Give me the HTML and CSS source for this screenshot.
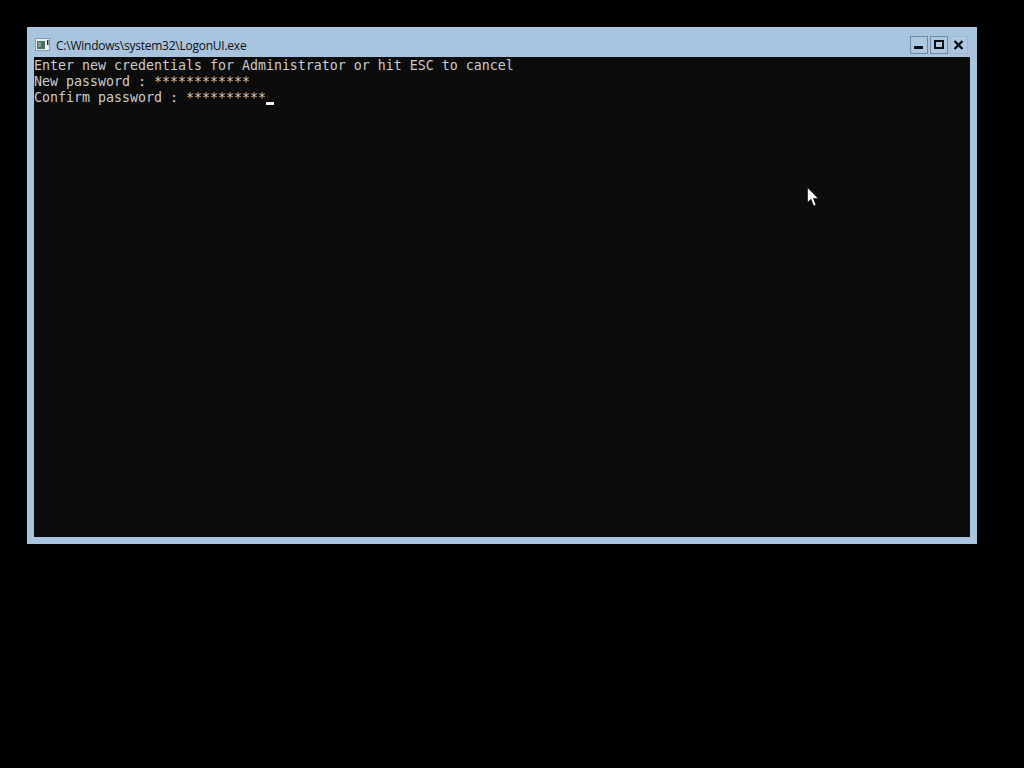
FILE: index.html
```html
<!DOCTYPE html>
<html lang="en">
<head>
<meta charset="utf-8">
<title>LogonUI</title>
<link rel="stylesheet" href="styles.css">
</head>
<body>
<div class="window">
  <div class="titlebar">
    <svg class="app-icon" width="16" height="14" viewBox="0 0 16 14">
      <rect x="0.5" y="0.5" width="14" height="12" fill="#e8eef2" stroke="#8a98a0"/>
      <rect x="2" y="3" width="8" height="8" fill="#4f6d66"/>
      <rect x="3" y="4" width="3" height="5" fill="#7fa08f"/>
      <rect x="12" y="2" width="1.5" height="5" fill="#2b3438"/>
    </svg>
    <span class="title">C:\Windows\system32\LogonUI.exe</span>
    <div class="controls">
      <div class="btn btn-framed">
        <svg width="18" height="18" viewBox="0 0 18 18"><rect x="4" y="10" width="9" height="3" fill="#0a0f14"/></svg>
      </div>
      <div class="btn btn-framed">
        <svg width="18" height="18" viewBox="0 0 18 18"><rect x="5" y="5" width="8" height="7" fill="none" stroke="#0a0f14" stroke-width="2"/></svg>
      </div>
      <div class="btn btn-close">
        <svg width="18" height="18" viewBox="0 0 18 18"><path d="M4.5 5L12.5 13M12.5 5L4.5 13" stroke="#0a0f14" stroke-width="2.4" fill="none"/></svg>
      </div>
    </div>
  </div>
  <div class="console">
    <div class="line">Enter new credentials for Administrator or hit ESC to cancel</div>
    <div class="line">New password : ************</div>
    <div class="line">Confirm password : **********<span class="caret"></span></div>
  </div>
</div>
<svg class="cursor" width="12" height="20" viewBox="0 0 12 20">
  <path d="M0.5 0.5V15.5L4 12.2L6.6 19L9 18L6.4 11.4H11.2Z" fill="#fff" stroke="#000" stroke-width="0.6"/>
</svg>
</body>
</html>
```

FILE: styles.css
```css
html, body {
  margin: 0;
  height: 100%;
  background: #000;
  overflow: hidden;
}
body {
  position: relative;
}
.window {
  position: absolute;
  left: 27px;
  top: 27px;
  width: 950px;
  height: 517px;
  box-sizing: border-box;
  padding: 0 7px 7px;
  background: #a9c4de;
  display: flex;
  flex-direction: column;
}
.titlebar {
  height: 30px;
  flex: none;
  display: flex;
  align-items: center;
  padding-top: 5px;
  box-sizing: border-box;
  padding-left: 1px;
}
.app-icon {
  flex: none;
  margin-right: 5px;
}
.title {
  font: 12px/16px "Open Sans", "Noto Sans", sans-serif;
  color: #0d1114;
  letter-spacing: -0.02em;
  white-space: nowrap;
  padding-top: 2px;
}
.controls {
  margin-left: auto;
  display: flex;
  gap: 2px;
  margin-right: 2px;
}
.btn {
  width: 18px;
  height: 18px;
  box-sizing: border-box;
  display: flex;
  align-items: center;
  justify-content: center;
  background: #aec8e0;
}
.btn svg {
  flex: none;
}
.btn-framed {
  outline: 1px solid #6f8aa6;
  outline-offset: -1px;
}
.btn-close {
  outline: 1px solid #9fb9d2;
  outline-offset: -1px;
}
.console {
  flex: 1;
  background: #0c0c0c;
  color: #cccccc;
  font: 13.29px/16px "DejaVu Sans Mono", monospace;
  padding-top: 1px;
}
.line {
  height: 16px;
  white-space: pre;
}
.caret {
  display: inline-block;
  width: 8px;
  height: 3px;
  background: #f2f2f2;
  vertical-align: -3px;
}
.cursor {
  position: absolute;
  left: 807px;
  top: 187px;
}
```
